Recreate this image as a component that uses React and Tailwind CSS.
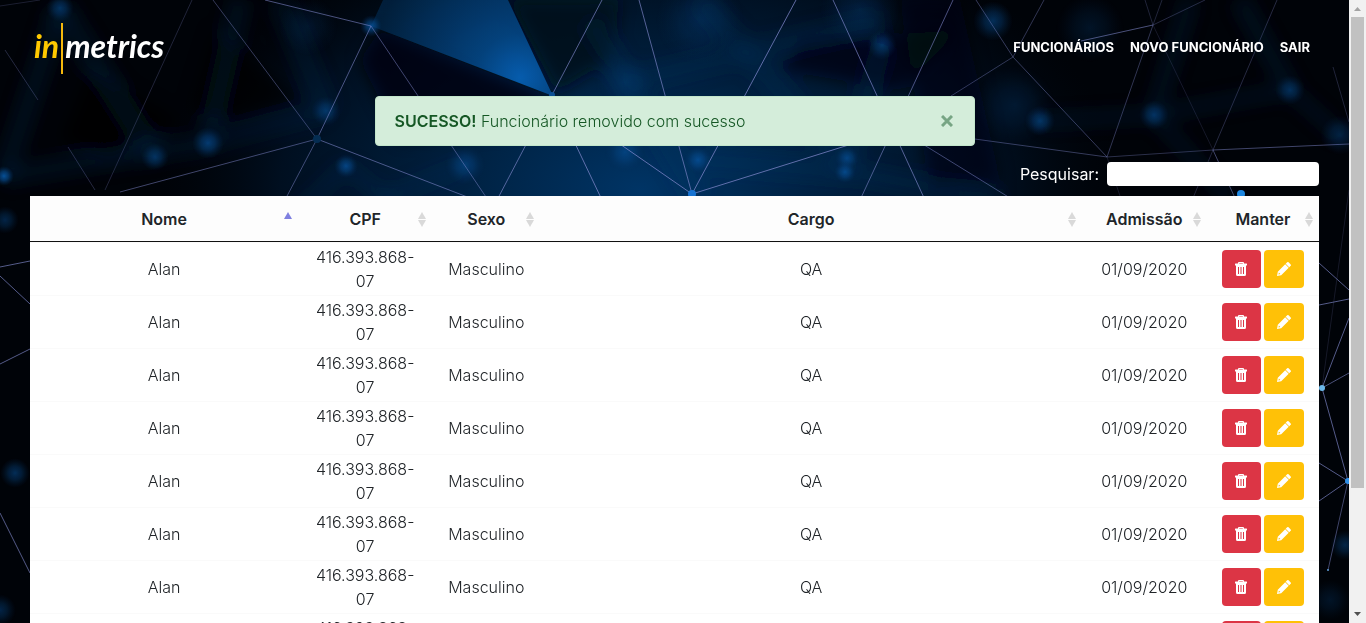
import React from "react";

const LINES = [
  [0, 6, 40, 0, 0.25], [5, 50, 38, 100, 0.35], [68, 147, 95, 190, 0.35], [192, 0, 105, 190, 0.3],
  [213, 0, 317, 139, 0.5], [265, 0, 371, 26, 0.7], [371, 26, 317, 139, 0.7], [371, 26, 488, 200, 0.6],
  [317, 139, 120, 192, 0.6], [317, 139, 286, 198, 0.6], [317, 139, 470, 198, 0.7],
  [602, 0, 552, 95, 0.8], [552, 95, 497, 200, 0.8], [552, 95, 602, 200, 0.9], [639, 0, 692, 194, 0.8],
  [552, 97, 692, 194, 0.9], [796, 0, 692, 194, 0.9], [833, 0, 925, 200, 0.8], [953, 0, 860, 200, 0.7],
  [692, 194, 855, 143, 0.9], [951, 96, 1013, 57, 0.45], [976, 0, 1013, 57, 0.5], [895, 127, 1010, 198, 0.6],
  [960, 137, 1107, 157, 0.5], [1044, 0, 1013, 57, 0.45], [1013, 57, 1107, 157, 0.5],
  [1107, 157, 1153, 25, 0.45], [1081, 41, 1153, 25, 0.7], [1153, 25, 1205, 0, 0.35],
  [1145, 0, 1153, 25, 0.3], [1162, 0, 1153, 25, 0.3], [1153, 25, 1213, 150, 0.2], [1277, 0, 1213, 150, 0.35],
  [1213, 150, 1349, 144, 0.6], [1107, 157, 1213, 150, 0.4], [1107, 157, 1120, 196, 0.2],
  [1213, 150, 1235, 198, 0.6], [1213, 150, 1193, 198, 0.3], [1333, 67, 1349, 122, 0.3],
  [0, 267, 30, 261, 0.8], [0, 276, 30, 304, 0.8], [0, 364, 30, 349, 0.8], [0, 513, 30, 573, 0.8],
  [1319, 263, 1349, 290, 0.8], [1319, 305, 1349, 299, 0.8], [1349, 318, 1322, 388, 0.8],
  [1322, 388, 1349, 373, 0.7], [1322, 388, 1348, 481, 0.8], [1319, 463, 1348, 481, 0.8],
  [1319, 501, 1348, 481, 0.8], [1348, 481, 1328, 570, 0.6], [1349, 190, 1322, 388, 0.2],
];

const GLOWS = [
  [60, 8, 14, 0.5], [208, 143, 16, 0.6], [155, 157, 14, 0.5], [326, 111, 15, 0.5], [346, 166, 12, 0.7],
  [4, 176, 10, 0.9], [308, 26, 30, 0.18], [371, 26, 11, 0.8], [465, 165, 20, 0.5], [625, 152, 20, 0.5],
  [698, 160, 14, 0.7], [847, 158, 12, 0.6], [845, 172, 11, 0.7], [882, 45, 15, 0.5], [993, 21, 20, 0.5],
  [1040, 121, 15, 0.55], [1154, 115, 15, 0.5], [1290, 90, 15, 0.45], [1340, 135, 20, 0.35], [1015, 105, 40, 0.2],
  [1090, 28, 34, 0.2], [5, 220, 14, 0.4], [15, 473, 15, 0.5], [0, 610, 16, 0.4], [1345, 545, 15, 0.4],
  [700, 20, 44, 0.25], [625, 82, 30, 0.2], [860, 10, 40, 0.25], [1330, 600, 20, 0.2],
];

const BEAMS = [
  [60, 8, 4, 176, 22], [60, 8, 155, 157, 26], [208, 143, 4, 176, 20], [208, 143, 240, 0, 22],
  [208, 143, 326, 111, 16], [346, 166, 290, 220, 14], [346, 166, 400, 210, 14], [280, 0, 326, 111, 24],
  [465, 165, 380, 200, 14], [590, 20, 700, 200, 24], [700, 0, 850, 170, 24], [625, 82, 880, 20, 22],
  [882, 45, 845, 172, 20], [700, 160, 850, 172, 22], [850, 172, 1000, 200, 20], [1040, 121, 1154, 115, 14],
  [1154, 115, 1290, 90, 14], [1154, 115, 1230, 200, 14], [1154, 115, 1190, 0, 18], [1290, 90, 1340, 135, 14],
  [1290, 90, 1240, 0, 20],
];

function NetworkBackground() {
  return (
    <svg
      aria-hidden="true"
      viewBox="0 0 1349 623"
      preserveAspectRatio="xMidYMin slice"
      className="absolute inset-0 h-full w-full"
    >
      <defs>
        <radialGradient id="haze" cx="640" cy="190" r="480" gradientUnits="userSpaceOnUse" gradientTransform="translate(0 76) scale(1 0.6)">
          <stop offset="0" stopColor="#003465" />
          <stop offset="0.4" stopColor="#00203f" />
          <stop offset="0.75" stopColor="#000f20" />
          <stop offset="1" stopColor="#00060f" stopOpacity="0" />
        </radialGradient>
        <radialGradient id="glow">
          <stop offset="0" stopColor="#0758a6" />
          <stop offset="0.45" stopColor="#064a8c" stopOpacity="0.7" />
          <stop offset="1" stopColor="#04305c" stopOpacity="0" />
        </radialGradient>
        <radialGradient id="facet" cx="520" cy="78" r="150" gradientUnits="userSpaceOnUse">
          <stop offset="0" stopColor="#0764bb" />
          <stop offset="0.3" stopColor="#044684" />
          <stop offset="1" stopColor="#01213f" />
        </radialGradient>
        <filter id="soft" x="-20%" y="-20%" width="140%" height="140%">
          <feGaussianBlur stdDeviation="8" />
        </filter>
      </defs>
      <rect width="1349" height="623" fill="#000308" />
      <rect width="1349" height="623" fill="url(#haze)" />
      <g filter="url(#soft)">
        <path d="M380 30L548 96L520 130L400 140L360 60Z" fill="#000814" opacity="0.8" />
        <path d="M508 0L620 0L610 60L556 92Z" fill="#000a1a" opacity="0.8" />
        <path d="M800 40L960 30L900 90L780 70Z" fill="#000814" opacity="0.7" />
        <path d="M900 0L960 0L1000 180L930 190Z" fill="#000814" opacity="0.6" />
        <path d="M90 70L180 120L110 160L60 140Z" fill="#000" opacity="0.8" />
        <path d="M215 30L300 100L230 120L190 110Z" fill="#000" opacity="0.7" />
        {BEAMS.map(([x1, y1, x2, y2, w], i) => (
          <line key={i} x1={x1} y1={y1} x2={x2} y2={y2} strokeWidth={w} stroke="#04386b" opacity="0.2" />
        ))}
      </g>
      <path d="M371 26L383 0H508L553 96Z" fill="url(#facet)" opacity="0.9" />
      {GLOWS.map(([x, y, r, o], i) => (
        <circle key={i} cx={x} cy={y} r={r} fill="url(#glow)" opacity={o} />
      ))}
      {LINES.map(([x1, y1, x2, y2, o], i) => (
        <line key={i} x1={x1} y1={y1} x2={x2} y2={y2} stroke="#7d86c8" strokeWidth="1" opacity={o * 0.85} />
      ))}
      <circle cx="692" cy="194" r="4" fill="#1673d2" />
      <circle cx="552" cy="95" r="3" fill="#0b4f94" />
      <circle cx="317" cy="139" r="4" fill="#052d52" />
      <circle cx="1241" cy="194" r="4" fill="#1c86e0" />
      <circle cx="1322" cy="388" r="3" fill="#6bb8ea" />
      <circle cx="1348" cy="481" r="3" fill="#2f8fe6" />
      <circle cx="1328" cy="570" r="1" fill="#5f9fd8" />
    </svg>
  );
}

function Logo() {
  return (
    <a href="#" aria-label="inmetrics" className="flex h-[51px] items-center font-[Lato,sans-serif] text-[32px] leading-none font-bold italic">
      <span className="pb-1 text-[#ffc900]">in</span>
      <span className="mx-[2px] h-full w-[2px] bg-[#f5b80c]" />
      <span className="pb-1 text-white">metrics</span>
    </a>
  );
}

function SortArrows({ active }) {
  return (
    <svg aria-hidden="true" width="8" height="16" viewBox="0 0 8 16" className="absolute top-[15px] right-[6px]">
      <path d="M4 1L8 8H0Z" fill={active ? "#7f80e0" : "#d9d9d9"} />
      {!active && <path d="M0 9H8L4 16Z" fill="#d9d9d9" />}
    </svg>
  );
}

function TrashIcon() {
  return (
    <svg aria-hidden="true" width="14" height="16" viewBox="0 0 14 16" fill="currentColor">
      <path fillRule="evenodd" d="M4 2.500V2a1 1 0 0 1 1-1h4a1 1 0 0 1 1 1V2.500H12.500a.5.5 0 0 1 .5.5V4.500H12v9a1.500 1.500 0 0 1-1.500 1.500h-7A1.500 1.500 0 0 1 2 13.500v-9H1V3a.5.5 0 0 1 .5-.5ZM5.200 2.500h3.600V2H5.200ZM4 6v7h1V6ZM6.500 6v7h1V6ZM9 6v7h1V6Z" />
    </svg>
  );
}

function PencilIcon() {
  return (
    <svg aria-hidden="true" width="16" height="16" viewBox="0 0 16 16" fill="currentColor">
      <path fillRule="evenodd" d="M11.200 1.300a1 1 0 0 1 1.400 0l2.100 2.100a1 1 0 0 1 0 1.400L13.200 6.300 9.700 2.800ZM9.200 3.300L12.700 6.800 5.200 14.200 1 15 1.800 10.800ZM2.900 11.600L2.500 13.500 4.300 13.100Z" />
    </svg>
  );
}

const COLUMNS = [
  ["Nome", "w-[20.8%]"],
  ["CPF", "w-[10.4%]"],
  ["Sexo", "w-[8.4%]"],
  ["Cargo", "w-[42%]"],
  ["Admissão", "w-[9.7%]"],
  ["Manter", "w-[8.7%]"],
];

const EMPLOYEES = Array.from({ length: 8 }, (_, id) => ({
  id,
  nome: "Alan",
  cpf: "416.393.868-07",
  sexo: "Masculino",
  cargo: "QA",
  admissao: "01/09/2020",
}));

export default function App() {
  return (
    <div className="flex h-screen overflow-hidden bg-black font-[Inter,sans-serif] text-base font-light text-[#212529]">
      <div className="relative min-w-0 flex-1 overflow-hidden">
        <NetworkBackground />
        <div className="relative px-[30px]">
          <header className="flex h-24 items-center justify-between pr-[9px] pl-1">
            <Logo />
            <nav className="flex gap-4 text-[13px] font-bold text-white">
              <a href="#funcionarios">FUNCIONÁRIOS</a>
              <a href="#novo">NOVO FUNCIONÁRIO</a>
              <a href="#sair">SAIR</a>
            </nav>
          </header>

          <div role="alert" className="mx-auto flex h-[50px] max-w-[600px] items-center justify-between rounded border border-[#c3e6cb] bg-[#d4edda] px-[19px] text-[#155724]">
            <p><strong className="font-semibold">SUCESSO!</strong> Funcionário removido com sucesso</p>
            <button type="button" aria-label="Fechar" className="flex size-4 items-center justify-center text-[#77a584]">
              <svg aria-hidden="true" width="12" height="12" viewBox="0 0 12 12" stroke="currentColor" strokeWidth="3">
                <path d="M1 1L11 11M11 1L1 11" />
              </svg>
            </button>
          </div>

          <div className="mt-4 mb-[10px] flex items-center justify-end gap-2">
            <label htmlFor="search" className="font-normal text-white">Pesquisar:</label>
            <input id="search" type="search" className="h-6 w-[212px] rounded bg-white px-1 text-black outline-none" />
          </div>

          <table className="w-full table-fixed border-separate border-spacing-0 bg-white text-center">
            <thead>
              <tr>
                {COLUMNS.map(([name, width], i) => (
                  <th key={name} className={`relative h-[46px] border-b border-[#111] bg-[#fdfdfd] p-0 font-semibold ${width}`}>
                    {name}
                    <SortArrows active={i === 0} />
                  </th>
                ))}
              </tr>
            </thead>
            <tbody>
              {EMPLOYEES.map((e) => (
                <tr key={e.id} className="h-[53px] *:border-t *:border-[#fafafa] *:p-0">
                  <td>{e.nome}</td>
                  <td><div className="px-4">{e.cpf}</div></td>
                  <td>{e.sexo}</td>
                  <td>{e.cargo}</td>
                  <td>{e.admissao}</td>
                  <td>
                    <div className="flex justify-center gap-[3px] text-white">
                      <button type="button" aria-label="Excluir" className="flex h-[38px] w-[39px] items-center justify-center rounded bg-[#dc3545]">
                        <TrashIcon />
                      </button>
                      <button type="button" aria-label="Editar" className="flex h-[38px] w-10 items-center justify-center rounded bg-[#ffc107]">
                        <PencilIcon />
                      </button>
                    </div>
                  </td>
                </tr>
              ))}
            </tbody>
          </table>
        </div>
      </div>

      <div aria-hidden="true" className="flex w-[17px] shrink-0 flex-col items-center bg-[#f1f1f1]">
        <svg width="17" height="17" viewBox="0 0 17 17"><path d="M5 11H12L8.5 7Z" fill="#a3a3a3" /></svg>
        <div className="flex w-[13px] flex-1 flex-col">
          <div className="h-4/5 bg-[#c1c1c1]" />
        </div>
        <svg width="17" height="17" viewBox="0 0 17 17"><path d="M5 6H12L8.5 10Z" fill="#505050" /></svg>
      </div>
    </div>
  );
}
